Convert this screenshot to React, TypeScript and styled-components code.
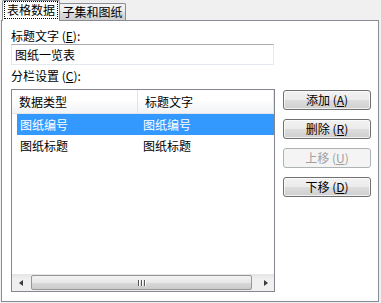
import React from "react"
import styled, { createGlobalStyle } from "styled-components"

const GlobalStyle = createGlobalStyle`
  html, body {
    margin: 0;
    padding: 0;
    background: #f0f0f0;
  }
  body {
    font-family: "Noto Sans CJK SC", "Liberation Sans", sans-serif;
    font-size: 12px;
    color: #000;
  }
`

const columns = [
  { title: "数据类型", width: 126 },
  { title: "标题文字", width: 136 },
]

const rows = [
  ["图纸编号", "图纸编号"],
  ["图纸标题", "图纸标题"],
]

const buttons = [
  { text: "添加", key: "A" },
  { text: "删除", key: "R" },
  { text: "上移", key: "U", disabled: true },
  { text: "下移", key: "D" },
]

const Window = styled.div`
  width: 381px;
  height: 303px;
  box-sizing: border-box;
  padding: 0 2px 1px 1px;
  display: flex;
  flex-direction: column;
  background: #f0f0f0;
`

const TabStrip = styled.div`
  display: flex;
  align-items: flex-end;
  height: 20px;
  padding-left: 1px;
`

const Tab = styled.div<{ $active?: boolean }>`
  position: relative;
  z-index: 1;
  box-sizing: border-box;
  display: flex;
  align-items: center;
  justify-content: center;
  border: 1px solid #898c95;
  border-bottom: none;
  height: ${(p) => (p.$active ? "21px" : "17px")};
  margin-bottom: ${(p) => (p.$active ? "-1px" : "0")};
  width: ${(p) => (p.$active ? "58px" : "67px")};
  margin-left: ${(p) => (p.$active ? "0" : "-1px")};
  background: ${(p) =>
    p.$active ? "#fff" : "linear-gradient(#f3f3f3, #ebebeb 50%, #dddddd 51%, #cfcfcf)"};
  border-radius: 2px 2px 0 0;
  line-height: 14px;
  padding-bottom: ${(p) => (p.$active ? "2px" : "0")};
`

const FocusText = styled.span`
  outline: 1px dotted #000;
  outline-offset: 1px;
  padding: 0 1px;
`

const Panel = styled.div`
  flex: 1;
  border: 1px solid #898c95;
  background: #fff;
  padding: 7px 9px 9px 9px;
  display: flex;
  flex-direction: column;
`

const Label = styled.div`
  height: 15px;
  line-height: 15px;
`

const TextInput = styled.div`
  box-sizing: border-box;
  width: 263px;
  height: 21px;
  margin: 1px 0 3px;
  border: 1px solid #e3e9ef;
  border-top-color: #abadb3;
  border-left-color: #e2e3ea;
  padding-left: 3px;
  line-height: 19px;
`

const Body = styled.div`
  flex: 1;
  margin-top: 6px;
  display: flex;
  gap: 8px;
`

const ListBox = styled.div`
  box-sizing: border-box;
  width: 264px;
  height: 203px;
  border: 1px solid #828790;
  display: flex;
  flex-direction: column;
`

const Header = styled.div`
  display: flex;
  height: 23px;
  background: linear-gradient(#ffffff, #ffffff 40%, #f2f3f5);
  border-bottom: 1px solid #e4e5e7;
`

const HeaderCell = styled.div<{ $w: number }>`
  box-sizing: border-box;
  width: ${(p) => p.$w}px;
  padding-left: 7px;
  line-height: 23px;
  border-right: 1px solid #e3e4e6;
  white-space: nowrap;
  overflow: hidden;
`

const Rows = styled.div`
  flex: 1;
  padding-left: 5px;
`

const Row = styled.div<{ $selected?: boolean }>`
  display: flex;
  height: 21px;
  line-height: 21px;
  background: ${(p) => (p.$selected ? "#3399ff" : "transparent")};
  color: ${(p) => (p.$selected ? "#fff" : "#000")};
`

const Cell = styled.div<{ $w: number; $pad: number }>`
  width: ${(p) => p.$w}px;
  padding-left: ${(p) => p.$pad}px;
  box-sizing: border-box;
  white-space: nowrap;
`

const ScrollBar = styled.div`
  display: flex;
  align-items: center;
  height: 17px;
  background: linear-gradient(#e3e3e3, #f0f0f0 30%, #f0f0f0);
`

const ArrowButton = styled.div<{ $dir: "left" | "right" }>`
  width: 17px;
  height: 17px;
  display: flex;
  align-items: center;
  justify-content: center;
  &::before {
    content: "";
    border-top: 3px solid transparent;
    border-bottom: 3px solid transparent;
    ${(p) =>
      p.$dir === "left" ? "border-right: 4px solid #3c3c3c;" : "border-left: 4px solid #3c3c3c;"}
  }
`

const Track = styled.div`
  flex: 1;
  height: 17px;
  display: flex;
  align-items: center;
  padding: 0 4px 0 2px;
`

const Thumb = styled.div`
  box-sizing: border-box;
  width: 221px;
  height: 15px;
  border: 1px solid #979797;
  border-radius: 2px;
  background: linear-gradient(#f3f3f3, #e7e7e7 50%, #d9d9d9 51%, #cbcbcb);
  display: flex;
  align-items: center;
  justify-content: center;
  gap: 1px;
`

const Grip = styled.span`
  width: 1px;
  height: 6px;
  background: #555;
  box-shadow: 1px 0 0 #fff;
  margin-right: 1px;
`

const ButtonColumn = styled.div`
  display: flex;
  flex-direction: column;
  gap: 9px;
  padding-top: 1px;
`

const PushButton = styled.div<{ $disabled?: boolean }>`
  box-sizing: border-box;
  width: 88px;
  height: 20px;
  border: 1px solid ${(p) => (p.$disabled ? "#adb2b5" : "#707070")};
  border-radius: 3px;
  background: ${(p) =>
    p.$disabled ? "#f4f4f4" : "linear-gradient(#f2f2f2, #ebebeb 50%, #dddddd 51%, #cfcfcf)"};
  box-shadow: ${(p) => (p.$disabled ? "none" : "inset 0 0 0 1px rgba(255,255,255,0.7)")};
  color: ${(p) => (p.$disabled ? "#a0a0a0" : "#000")};
  display: flex;
  align-items: center;
  justify-content: center;
  line-height: 14px;
`

export default function App() {
  return (
    <>
      <GlobalStyle />
      <Window>
        <TabStrip>
          <Tab $active>
            <FocusText>表格数据</FocusText>
          </Tab>
          <Tab>子集和图纸</Tab>
        </TabStrip>
        <Panel>
          <Label>
            标题文字 (<u>E</u>):
          </Label>
          <TextInput>图纸一览表</TextInput>
          <Label>
            分栏设置 (<u>C</u>):
          </Label>
          <Body>
            <ListBox>
              <Header>
                {columns.map((c) => (
                  <HeaderCell key={c.title} $w={c.width}>
                    {c.title}
                  </HeaderCell>
                ))}
              </Header>
              <Rows>
                {rows.map((r, i) => (
                  <Row key={i} $selected={i === 0}>
                    <Cell $w={121} $pad={3}>
                      {r[0]}
                    </Cell>
                    <Cell $w={130} $pad={5}>
                      {r[1]}
                    </Cell>
                  </Row>
                ))}
              </Rows>
              <ScrollBar>
                <ArrowButton $dir="left" />
                <Track>
                  <Thumb>
                    <Grip />
                    <Grip />
                    <Grip />
                  </Thumb>
                </Track>
                <ArrowButton $dir="right" />
              </ScrollBar>
            </ListBox>
            <ButtonColumn>
              {buttons.map((b) => (
                <PushButton key={b.key} $disabled={b.disabled}>
                  {b.text} (<u>{b.key}</u>)
                </PushButton>
              ))}
            </ButtonColumn>
          </Body>
        </Panel>
      </Window>
    </>
  )
}
